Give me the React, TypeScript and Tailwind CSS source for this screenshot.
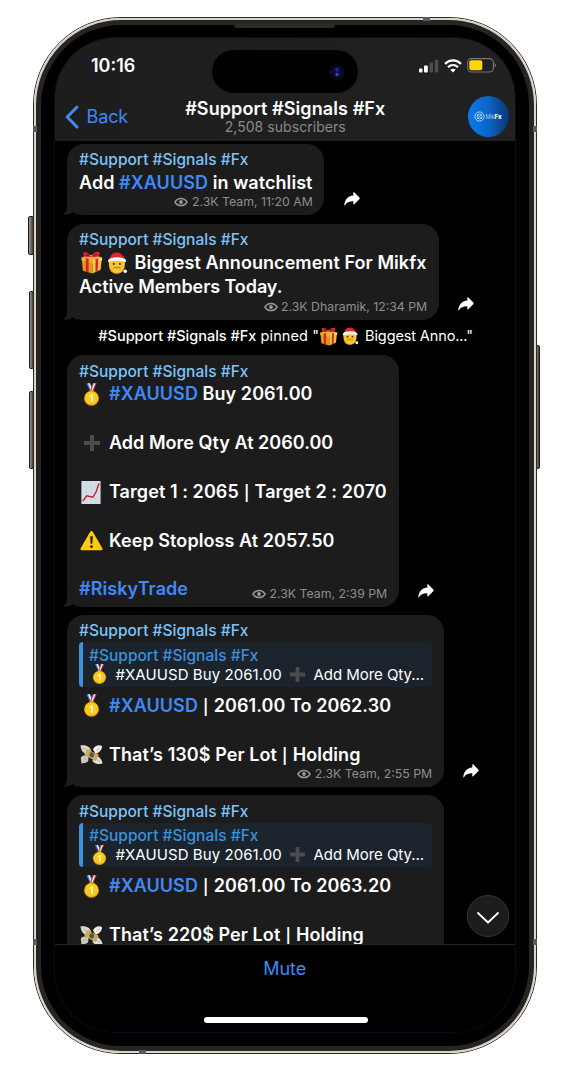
import type { ReactNode } from 'react';

const CHANNEL = '#Support #Signals #Fx';

function Gift({ className }: { className: string }) {
  return (
    <svg viewBox="0 0 24 24" className={className}>
      <path d="M2 9.5 L13 12.5 V23.5 L3 20.5Z" fill="#e39a1c" />
      <path d="M13 12.5 L22.5 9 L21.5 19.5 L13 23.5Z" fill="#f6c63a" />
      <path d="M1.5 6.5 L11.5 4 L23 6.5 L13 10Z" fill="#f2b632" />
      <path d="M1.5 6.5 L13 9.5 V13 L1.5 10Z" fill="#f0b02c" />
      <path d="M13 9.5 L23 6.5 V9.8 L13 13Z" fill="#ffd75a" />
      <path d="M6 7.6 L9 8.4 V22.3 L6 21.4Z M16.2 8.5 L19 7.7 L18.4 21 L16.2 22Z" fill="#d8222f" />
      <path d="M11.5 6 C8 0 3 .5 3.5 3.5 C4 6 8 7.5 11.5 6 C14 1 19 -.5 20.5 2 C21.5 5 16 7.5 11.5 6Z" fill="#e5293a" />
      <path d="M10 5 C8 2.5 6 2.4 5.6 3.6 C5.6 5 8 5.5 10 5Z M14 4.8 C15.5 2.3 18 2 18.4 3.2 C18.4 4.7 16 5.2 14 4.8Z" fill="#9b1320" />
    </svg>
  );
}

function Santa({ className }: { className: string }) {
  return (
    <svg viewBox="0 0 22 24" className={className}>
      <path d="M1.800 9 H18.800 C20 16 17.500 23.500 10.300 23.500 C3 23.500 .8 16 1.800 9Z" fill="#fac62f" />
      <path d="M2 15 C3 20.800 6 22.800 10.300 22.800 C14.600 22.800 17.600 20.800 18.600 15 C18.800 20 16 23.600 10.300 23.600 C4.600 23.600 1.800 20 2 15Z" fill="#d9981a" />
      <path d="M2.500 7.500 C4 -1.500 15 -2 19 7.500Z" fill="#e02534" />
      <path d="M1 8.500 C3.500 4.800 17.500 4.800 20 8.500 C20.500 10 20 11.500 19 11 C15.500 9 5.500 9 2 11 C1 11.500 .5 10 1 8.500Z" fill="#fff" />
      <circle cx="7" cy="13" r="1.200" fill="#5a3711" />
      <circle cx="13.600" cy="13" r="1.200" fill="#5a3711" />
      <path d="M6.500 18 C8 16.300 9.500 16.500 10.300 17.200 C11.200 16.500 12.600 16.300 14.200 18" fill="none" stroke="#b87612" strokeWidth="1.200" />
      <circle cx="19.400" cy="21" r="1.900" fill="#fff" />
    </svg>
  );
}

function Medal({ className }: { className: string }) {
  return (
    <svg viewBox="0 0 18 24" className={className}>
      <path d="M3.500 0 H8 L11.500 8.500 H7.500Z" fill="#3f78d8" />
      <path d="M5.300 0 H6.800 L10.200 8 H8.600Z" fill="#fff" />
      <path d="M14.500 0 H10.300 L7 8.500 H10.500Z" fill="#e0495a" />
      <path d="M13 0 H11.700 L8.800 8 H10Z" fill="#fff" />
      <rect x="7" y="7" width="4" height="2.500" rx="1" fill="#d89a12" />
      <circle cx="9" cy="16" r="7.900" fill="#e09a0c" />
      <circle cx="9" cy="15.700" r="7" fill="#fbc81e" />
      <path d="M6.800 13.400 L9 11.800 H10.700 V19.700 H8.500 V14.200 L6.800 15Z" fill="#fff3b0" />
    </svg>
  );
}

function Plus({ className }: { className: string }) {
  return (
    <svg viewBox="0 0 18 18" className={className}>
      <path d="M7 1h4v6h6v4h-6v6H7v-6H1V7h6Z" fill="#4b4b4d" />
    </svg>
  );
}

function Chart({ className }: { className: string }) {
  return (
    <svg viewBox="0 0 20 24" className={className}>
      <rect width="20" height="24" fill="#d5dee6" />
      <path d="M0 6H20M0 12H20M0 18H20M5 0V24M10 0V24M15 0V24" stroke="#c6d1db" strokeWidth=".6" />
      <path d="M1.500 21 L5.500 15.500 L12 17 L15.500 11 L18.300 2.500" fill="none" stroke="#c92127" strokeWidth="1.500" />
    </svg>
  );
}

function Warning({ className }: { className: string }) {
  return (
    <svg viewBox="0 0 24 21" className={className}>
      <path d="M12 .5 C12.700 .5 13.100 .9 13.500 1.600 L23.300 18.600 C24 19.800 23.500 20.700 22.200 20.700 H1.800 C.5 20.700 0 19.800 .7 18.600 L10.500 1.600 C10.900 .9 11.300 .5 12 .5Z" fill="#fdcb12" />
      <path d="M10.600 6 H13.400 L12.900 13.800 H11.100Z" fill="#2b2410" />
      <circle cx="12" cy="16.900" r="1.500" fill="#2b2410" />
    </svg>
  );
}

function Money({ className }: { className: string }) {
  return (
    <svg viewBox="0 0 24 21" className={className}>
      <path d="M.5 1 C5 0 10.500 2 11.500 6 L8 10.500 C3.500 9.500 1 6 .5 1Z" fill="#d9d9cd" />
      <path d="M13.500 5 C15.500 1 20 0 23 1.500 C23 5.500 20 9 16 9.500Z" fill="#efefe6" />
      <path d="M.8 13.500 C3 11 6 10.500 9 12 L8.500 17.500 C6 19.800 3.500 19.500 1.500 19.800Z" fill="#c9c9bb" />
      <path d="M15 12 C19 11 22.500 15 23.500 19.500 C20 21.500 15 20.500 13 17Z" fill="#deded2" />
      <path d="M7 4.800 L19.500 11 L16.500 17.500 L4.500 10.800Z" fill="#b5b396" />
      <path d="M9.500 4.500 L12 5.800 L8.600 13 L6.500 11.800Z M17 9 L19 10.200 L16 17 L14 15.800Z" fill="#e0a630" />
      <ellipse cx="12.300" cy="10.800" rx="2.500" ry="2.700" fill="#5a563c" />
      <path d="M3 3.500 L7.500 6.500 M20.500 3.500 L17 6.200 M3.500 15.500 L6.500 15 M21 18 L17 15.500" stroke="#9b9b8f" strokeWidth=".6" />
    </svg>
  );
}

function ShareArrow() {
  return (
    <svg viewBox="0 0 16 14" className="mb-[9px] ml-[19.800px] h-[14px] w-4 shrink-0">
      <path d="M9.300 .6 C9.300 .1 9.800 0 10.200 .3 L15.500 5.800 C15.800 6.200 15.800 6.600 15.500 7 L10.200 12.300 C9.800 12.700 9.300 12.500 9.300 12 V9.300 C5.500 9.200 2.700 10.300 1 13.200 C.7 13.600 .2 13.500 .3 12.900 C.8 8 3.800 3.800 9.300 3.500Z" fill="#fff" />
    </svg>
  );
}

function Eye() {
  return (
    <svg viewBox="0 0 14 10" className="h-[10px] w-[14px]">
      <path d="M1 5 C3.800 .2 10.200 .2 13 5 C10.200 9.800 3.800 9.800 1 5Z" fill="none" stroke="#98989c" strokeWidth="1.500" />
      <circle cx="7" cy="5" r="1.900" fill="#98989c" />
    </svg>
  );
}

function Meta({ text, className = '' }: { text: string; className?: string }) {
  return (
    <div className={`flex h-4 items-center justify-end gap-[3.500px] text-[12.300px] leading-4 text-[#8e8e92] ${className}`}>
      <Eye />
      <span>{text}</span>
    </div>
  );
}

function Line({ icon, children }: { icon?: ReactNode; children?: ReactNode }) {
  return (
    <div className="flex h-[24.400px] items-center">
      {icon && <span className="flex w-[30px] shrink-0 items-center pl-[1px]">{icon}</span>}
      <span>{children}</span>
    </div>
  );
}

function Tag({ children }: { children: ReactNode }) {
  return <span className="text-[#3e8af7]">{children}</span>;
}

function Bar() {
  return <span className="inline-block w-[6.500px] text-center text-[15px] leading-4">|</span>;
}

function Message({ className, open = false, children }: { className: string; open?: boolean; children: ReactNode }) {
  return (
    <div className="flex items-end">
      <div className={`relative shrink-0 rounded-[17px] bg-[#1c1c1d] pt-[6.300px] pr-[11.500px] pl-[11.700px] ${className}`}>
        {!open && (
          <svg viewBox="0 0 16 18" className="absolute bottom-0 -left-1 h-[18px] w-4">
            <path d="M4 0 V9 C4 13.500 2.500 16 0 17.500 C4 18.300 7.500 17.300 9.500 15.300 L15 18 L16 8Z" fill="#1c1c1d" />
          </svg>
        )}
        <div className="relative">
          <div className="h-[19px] text-[15.500px] leading-[19px] font-medium tracking-[0.020px] text-[#7cc5f8]">{CHANNEL}</div>
          {children}
        </div>
      </div>
      {!open && <ShareArrow />}
    </div>
  );
}

function Body({ children, className = 'mt-[1.600px] -mb-[0.600px]' }: { children: ReactNode; className?: string }) {
  return <div className={`text-[18px] leading-[24.400px] font-semibold tracking-[0.070px] whitespace-pre text-white ${className}`}>{children}</div>;
}

function Reply() {
  return (
    <div className="mt-[2px] flex h-[44.500px] overflow-hidden rounded-[4px] bg-[#1b242d]">
      <div className="w-[4px] bg-[#3c93dd]" />
      <div className="pt-[3.300px] pl-[6px] whitespace-pre">
        <div className="text-[15.500px] leading-[19px] font-medium tracking-[0.020px] text-[#3a92dc]">{CHANNEL}</div>
        <div className="flex h-[19px] items-center text-[15px] leading-[19px] text-white">
          <span className="w-[26.500px] pl-[3px]"><Medal className="h-[20px] w-[15px]" /></span>
          <span className="w-[174px] tracking-[0.070px]">#XAUUSD Buy 2061.00</span>
          <span className="w-[24px]"><Plus className="size-[17px]" /></span>
          <span className="tracking-[-0.050px]">Add More Qty...</span>
        </div>
      </div>
    </div>
  );
}

function ResultMessage({ price, profit, meta, className }: { price: string; profit: string; meta?: string; className: string }) {
  return (
    <Message className={className} open={!meta}>
      <Reply />
      <Body className="mt-[7px] -mb-[0.500px]">
        <Line icon={<Medal className="ml-[3px] h-[23px] w-[17px]" />}><Tag>#XAUUSD</Tag> <Bar /> 2061.00 To {price}</Line>
        <Line />
        <Line icon={<Money className="h-[21px] w-[23px]" />}>That’s {profit}$ Per Lot <Bar /> Holding</Line>
      </Body>
      {meta && <Meta text={meta} />}
    </Message>
  );
}

function Header() {
  return (
    <header className="h-[103px] shrink-0 bg-linear-to-r from-[#1d1d1e] to-[#212121]">
      <div className="flex h-[56px] items-start pt-[12px] pr-[19px] pl-[36px]">
        <span className="mt-[5px] w-[120.500px] text-[18px] leading-[22px] font-semibold text-white">10:16</span>
        <div className="flex h-[43px] w-[146px] items-center justify-end rounded-full bg-black pr-[13px] shadow-[0_0_1px_#22204a]">
          <svg viewBox="0 0 16 16" className="size-4">
            <circle cx="8" cy="8" r="8" fill="#0c0913" />
            <circle cx="8" cy="8" r="5.500" fill="#0d0b2c" />
            <circle cx="8" cy="5.800" r="2" fill="#20249a" />
            <circle cx="8" cy="10.300" r="2" fill="#1c2f8e" />
            <circle cx="8" cy="10.500" r=".8" fill="#4a8ce0" />
          </svg>
        </div>
        <div className="ml-auto flex items-center gap-[5px] pt-[8px]">
          <svg viewBox="0 0 20 14" className="h-[14px] w-5">
            <rect x="0" y="9.500" width="3.500" height="4" rx="1" fill="#fff" />
            <rect x="5" y="6.500" width="3.800" height="7" rx="1" fill="#fff" />
            <rect x="10.500" y="3.500" width="3.600" height="10" rx="1" fill="#4d4d4f" />
            <rect x="15.700" y=".8" width="3.600" height="12.700" rx="1" fill="#4d4d4f" />
          </svg>
          <svg viewBox="0 0 18 14" className="h-[14px] w-[18px]" fill="none" stroke="#fff">
            <path d="M1 4.800 C5.500 .2 12.500 .2 17 4.800" strokeWidth="2.400" />
            <path d="M4 8.200 C7 5.400 11 5.400 14 8.200" strokeWidth="2.200" />
            <path d="M9 13.500 L6.300 10.800 C7.800 9.500 10.200 9.500 11.700 10.800Z" fill="#fff" stroke="none" />
          </svg>
          <svg viewBox="0 0 29 15" className="h-[15px] w-[29px]">
            <rect x=".6" y=".6" width="25.800" height="13.400" rx="4" fill="none" stroke="#77777a" strokeWidth="1.100" />
            <rect x="2.300" y="2.300" width="13" height="10" rx="2" fill="#ffd60a" />
            <path d="M27.500 5 C29.300 6 29.300 8.700 27.500 9.700Z" fill="#77777a" />
          </svg>
        </div>
      </div>
      <div className="flex h-[45px] items-center pr-[6px] pl-[10px]">
        <div className="flex w-[97px] items-center gap-[7.500px]">
          <svg viewBox="0 0 14 24" className="h-6 w-[14px]">
            <path d="M12 2 L2.200 12 L12 22" fill="none" stroke="#3e8af7" strokeWidth="3" strokeLinecap="round" strokeLinejoin="round" />
          </svg>
          <span className="text-[18px] leading-6 tracking-[-0.100px] text-[#3e8af7]">Back</span>
        </div>
        <div className="flex flex-1 flex-col items-center whitespace-nowrap">
          <h1 className="text-[18px] leading-[22px] font-semibold tracking-[0.090px] text-white">{CHANNEL}</h1>
          <p className="-mt-[1.500px] text-[14px] leading-[17px] tracking-[0.050px] text-[#8a8a8d]">2,508 subscribers</p>
        </div>
        <div className="flex w-[100px] justify-end">
          <div className="flex size-[41px] items-center justify-center rounded-full bg-linear-to-r from-[#0a79ec] via-[#0b65c6] to-[#083672]">
            <svg viewBox="0 0 12 12" className="size-[11px]" fill="none" stroke="#dcecff">
              <circle cx="6" cy="6" r="5" strokeWidth=".9" />
              <circle cx="6" cy="6" r="2.600" strokeWidth=".8" />
              <path d="M3.500 3.500 L8.500 8.500 M8.500 3.500 L3.500 8.500" strokeWidth=".6" />
            </svg>
            <span className="text-[5.500px] leading-[8px] font-light text-[#cfe4ff]">Mik</span>
            <span className="text-[6px] leading-[8px] font-extrabold text-white">Fx</span>
          </div>
        </div>
      </div>
    </header>
  );
}

function Chat() {
  return (
    <main className="h-[803px] shrink-0 overflow-hidden pt-[2.700px] pl-[12.300px]">
      <Message className="h-[71.300px] w-[257px]">
        <Body><Line>Add <Tag>#XAUUSD</Tag> in watchlist</Line></Body>
        <Meta text="2.3K Team, 11:20 AM" />
      </Message>
      <div className="h-[8.700px]" />
      <Message className="h-[96px] w-[371.400px]">
        <Body>
          <div className="flex h-[24.400px] items-center">
            <Gift className="ml-[1px] size-[23px]" />
            <Santa className="ml-[4px] h-[22px] w-[21px]" />
            <span className="ml-[6.500px]">Biggest Announcement For Mikfx</span>
          </div>
          <Line><span className="tracking-[-0.080px]">Active Members Today.</span></Line>
        </Body>
        <Meta text="2.3K Dharamik, 12:34 PM" />
      </Message>
      <div className="flex h-[35.800px] items-center pb-[3px] pl-[31px] text-[14.500px] whitespace-pre text-white">
        <span className="font-medium">{CHANNEL}</span>
        <span className="tracking-[0.100px]"> pinned "</span>
        <Gift className="size-[19px]" />
        <Santa className="ml-[4px] h-[18px] w-[17px]" />
        <span className="ml-[6px] tracking-[-0.120px]">Biggest Anno..."</span>
      </div>
      <Message className="h-[251.200px] w-[331.400px]">
        <Body>
          <Line icon={<Medal className="ml-[3px] h-[23px] w-[17px]" />}><Tag>#XAUUSD</Tag> Buy 2061.00</Line>
          <Line />
          <Line icon={<Plus className="ml-[3px] size-[18px]" />}><span className="tracking-[0.030px]">Add More Qty At 2060.00</span></Line>
          <Line />
          <Line icon={<Chart className="ml-[1px] h-[23px] w-5" />}>Target 1 : 2065 <Bar /> Target 2 : 2070</Line>
          <Line />
          <Line icon={<Warning className="h-[21px] w-[23px]" />}>Keep Stoploss At 2057.50</Line>
          <Line />
          <Line><Tag>#RiskyTrade</Tag></Line>
        </Body>
        <Meta text="2.3K Team, 2:39 PM" className="-mt-[15.400px]" />
      </Message>
      <div className="h-[8.300px]" />
      <ResultMessage className="h-[172.500px] w-[376.400px]" price="2062.30" profit="130" meta="2.3K Team, 2:55 PM" />
      <div className="h-[8px]" />
      <ResultMessage className="h-[180px] w-[376.400px]" price="2063.20" profit="220" />
    </main>
  );
}

function SideButton({ className }: { className: string }) {
  return <div className={`absolute rounded-[2px] border border-[#1c1b1a] bg-linear-to-r from-[#a39a90] to-[#403c39] ${className}`} />;
}

export default function App() {
  return (
    <div className="relative h-[1080px] w-[568px] overflow-hidden bg-white pt-[17px] pl-[33px] font-[Inter,sans-serif]">
      <SideButton className="top-[216px] left-[28px] h-[39px] w-[6px]" />
      <SideButton className="top-[291px] left-[29px] h-[78px] w-[5px]" />
      <SideButton className="top-[391px] left-[29px] h-[78px] w-[5px]" />
      <SideButton className="top-[345px] left-[535px] h-[124px] w-[5px]" />
      <div className="relative h-[1037px] w-[504px] rounded-[88px] border border-[#2c2a28]">
        <div className="h-full rounded-[87px] border-2 border-[#ddd4c9]">
          <div className="h-full rounded-[85px] border-[5px] border-[#272523] bg-black">
            <div className="flex h-full flex-col pt-[13px] pr-[14.500px] pl-[14px]">
              <div className="relative flex h-[994px] flex-col overflow-hidden rounded-[60px] bg-black shadow-[0_0_0_1px_#0c0b1c]">
                <Header />
                <Chat />
                <footer className="flex flex-1 flex-col items-center border-t border-[#222223]">
                  <span className="mt-[12px] text-[18px] leading-6 text-[#3e8af7]">Mute</span>
                  <div className="mt-[36px] ml-[2px] h-[6px] w-[164px] rounded-full bg-white" />
                </footer>
                <div className="absolute right-[6px] bottom-[95px] flex size-[42px] items-center justify-center rounded-full border border-[#343436] bg-[#1c1c1d]">
                  <svg viewBox="0 0 22 12" className="mt-[3px] h-3 w-[22px]">
                    <path d="M1 1 L11 10.500 L21 1" fill="none" stroke="#fff" strokeWidth="1.800" strokeLinecap="round" strokeLinejoin="round" />
                  </svg>
                </div>
              </div>
            </div>
          </div>
        </div>
        <div className="absolute top-[6px] left-[200px] h-[3.500px] w-[101px] rounded-b-[3px] bg-[#2b2b2b]" />
        <div className="absolute top-[108px] -left-px h-[6px] w-[4px] bg-[#5c5a57]" />
        <div className="absolute top-[108px] -right-px h-[6px] w-[4px] bg-[#5c5a57]" />
        <div className="absolute top-[921px] -left-px h-[6px] w-[4px] bg-[#5c5a57]" />
        <div className="absolute top-[921px] -right-px h-[6px] w-[4px] bg-[#5c5a57]" />
        <div className="absolute -top-px left-[389px] h-[4px] w-[7px] bg-[#5c5a57]" />
        <div className="absolute -bottom-px left-[105px] h-[4px] w-[7px] bg-[#5c5a57]" />
      </div>
    </div>
  );
}
